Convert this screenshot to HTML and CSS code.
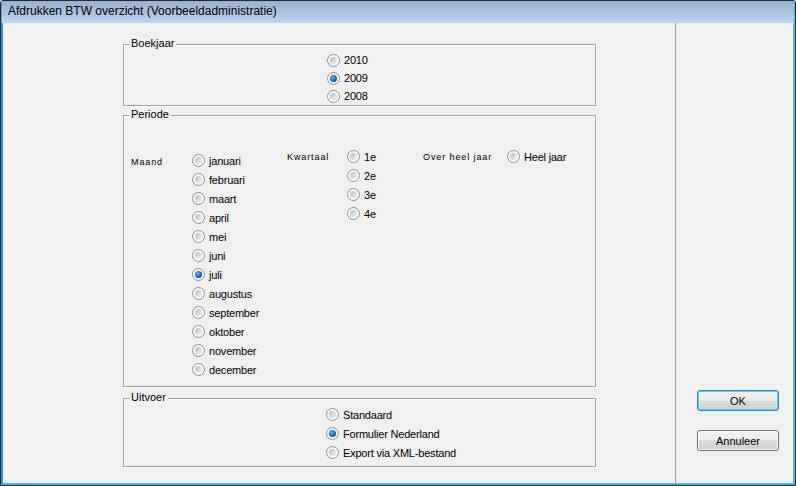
FILE: index.html
```html
<!DOCTYPE html>
<html>
<head>
<meta charset="utf-8">
<link rel="stylesheet" href="styles.css">
</head>
<body>
<div class="window">
  <div class="titlebar">Afdrukken BTW overzicht (Voorbeeldadministratie)</div>
  <div class="client">
    <div class="main">
      <div class="group g-year">
        <span class="legend">Boekjaar</span>
        <div class="list list-year">
          <div class="opt"><span class="radio"></span>2010</div>
          <div class="opt"><span class="radio checked"></span>2009</div>
          <div class="opt"><span class="radio"></span>2008</div>
        </div>
      </div>
      <div class="group g-period">
        <span class="legend">Periode</span>
        <div class="period-body">
          <div class="small lbl-maand">Maand</div>
          <div class="list col-months">
            <div class="opt"><span class="radio"></span>januari</div>
            <div class="opt"><span class="radio"></span>februari</div>
            <div class="opt"><span class="radio"></span>maart</div>
            <div class="opt"><span class="radio"></span>april</div>
            <div class="opt"><span class="radio"></span>mei</div>
            <div class="opt"><span class="radio"></span>juni</div>
            <div class="opt"><span class="radio checked"></span>juli</div>
            <div class="opt"><span class="radio"></span>augustus</div>
            <div class="opt"><span class="radio"></span>september</div>
            <div class="opt"><span class="radio"></span>oktober</div>
            <div class="opt"><span class="radio"></span>november</div>
            <div class="opt"><span class="radio"></span>december</div>
          </div>
          <div class="small lbl-kwartaal">Kwartaal</div>
          <div class="list col-quarters">
            <div class="opt"><span class="radio"></span>1e</div>
            <div class="opt"><span class="radio"></span>2e</div>
            <div class="opt"><span class="radio"></span>3e</div>
            <div class="opt"><span class="radio"></span>4e</div>
          </div>
          <div class="small lbl-heel">Over heel jaar</div>
          <div class="list col-heel">
            <div class="opt"><span class="radio"></span>Heel jaar</div>
          </div>
        </div>
      </div>
      <div class="group g-output">
        <span class="legend">Uitvoer</span>
        <div class="list list-output">
          <div class="opt"><span class="radio"></span>Standaard</div>
          <div class="opt"><span class="radio checked"></span>Formulier Nederland</div>
          <div class="opt"><span class="radio"></span>Export via XML-bestand</div>
        </div>
      </div>
    </div>
    <div class="side">
      <button class="btn btn-default">OK</button>
      <button class="btn btn-cancel">Annuleer</button>
    </div>
  </div>
</div>
</body>
</html>
```

FILE: styles.css
```css
html, body {
  margin: 0;
  padding: 0;
  background: #f0f0f0;
}

.window {
  width: 796px;
  height: 486px;
  box-sizing: border-box;
  border: 1px solid #1f2b38;
  border-top-left-radius: 3px;
  border-top-right-radius: 3px;
  display: flex;
  flex-direction: column;
  overflow: hidden;
  font-family: "Liberation Sans", Arial, sans-serif;
  font-size: 11px;
  color: #000;
}

.titlebar {
  height: 22px;
  flex: none;
  box-sizing: border-box;
  padding-left: 6px;
  line-height: 21px;
  font-size: 12px;
  color: #000;
  background: linear-gradient(#99b1ce, #bed5ee);
  border-left: 1px solid #6f9ac0;
  border-right: 1px solid #41b9e6;
}

.client {
  flex: 1;
  display: flex;
  background: #f0f0f0;
  border-left: 2px solid #3f8fc4;
  border-right: 2px solid #3cc0ea;
  border-bottom: 2px solid #3cc0ea;
}

.main {
  width: 672px;
  flex: none;
  box-sizing: border-box;
  padding-top: 21px;
  padding-left: 120px;
}

.side {
  flex: 1;
  border-left: 1px solid #a0a0a0;
  display: flex;
  flex-direction: column;
  padding-top: 367px;
  padding-left: 21px;
}

/* group boxes */
.group {
  position: relative;
  box-sizing: border-box;
  width: 473px;
  border: 1px solid #a0a0a0;
  box-shadow: inset 1px 1px 0 #fff, 1px 1px 0 #fff;
}

.g-year { height: 62px; }
.g-period { height: 272px; margin-top: 9px; }
.g-output { height: 69px; margin-top: 11px; }

.legend {
  position: absolute;
  top: -8px;
  left: 5px;
  padding: 0 2px;
  line-height: 13px;
  background: #f0f0f0;
  font-size: 11px;
}

/* radio lists */
.opt {
  display: flex;
  align-items: center;
  height: 19px;
  gap: 4px;
  white-space: nowrap;
  letter-spacing: -0.2px;
}

.list-year {
  padding-top: 6px;
  padding-left: 203px;
}
.list-year .opt { height: 18px; }

.list-output {
  padding-top: 6px;
  padding-left: 202px;
}

.period-body {
  display: flex;
  align-items: flex-start;
  padding-top: 31px;
  padding-left: 7px;
}

.small {
  font-family: "Liberation Sans", Arial, sans-serif;
  font-size: 9px;
  line-height: 10px;
  letter-spacing: 0.9px;
  white-space: nowrap;
}

.lbl-maand { width: 61px; margin-top: 10px; }
.col-months { width: 95px; margin-top: 4px; }
.lbl-kwartaal { width: 60px; margin-top: 5px; }
.col-quarters { width: 76px; }
.lbl-heel { width: 84px; margin-top: 5px; }

/* radio glyph */
.radio {
  flex: none;
  position: relative;
  width: 13px;
  height: 13px;
  box-sizing: border-box;
  border-radius: 50%;
  border: 1px solid #8c8e90;
  background: #f8f8f8;
}

.radio::after {
  content: "";
  position: absolute;
  left: 2px;
  top: 2px;
  width: 7px;
  height: 7px;
  border-radius: 50%;
  background: linear-gradient(135deg, #b5b5b5, #dedede 60%, #f0f0f0);
}

.radio.checked::after {
  background: radial-gradient(circle at 40% 40%, #7cc4f4 0, #2c7fd0 35%, #0f3f84 85%);
}

/* buttons */
.btn {
  width: 82px;
  height: 21px;
  box-sizing: border-box;
  padding: 0;
  border: 1px solid #707070;
  border-radius: 3px;
  font-family: "Liberation Sans", Arial, sans-serif;
  font-size: 11px;
  color: #000;
  background: linear-gradient(#f2f2f2 0, #ebebeb 50%, #dddddd 50%, #cfcfcf 100%);
  box-shadow: inset 0 0 0 1px #fcfcfc;
}

.btn-default {
  border-color: #3c7fb1;
  box-shadow: inset 0 0 0 1px #48d2fc;
}

.btn-cancel {
  margin-top: 19px;
}
```
